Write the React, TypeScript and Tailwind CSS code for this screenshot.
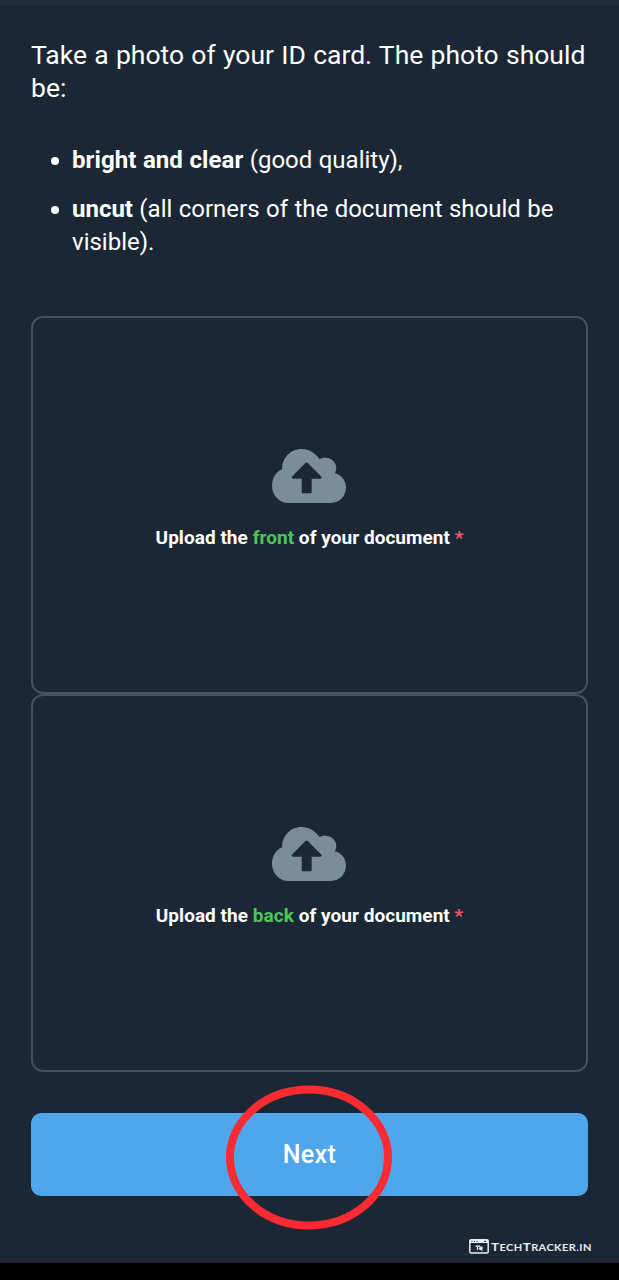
type UploadBoxProps = { before: string; side: string };

function CloudUpload() {
  return (
    <svg viewBox="0 32 640 448" preserveAspectRatio="none" className="mr-px h-[54px] w-[74px] text-[#7b8c9a]" fill="currentColor" aria-hidden="true">
      <path d="M544 233c8-12 12-26 12-41 0-53-43-88-94-88-19.700 0-36 4-49.300 12.200C376 64.200 315.300 32 256 32c-97 0-172 76-168 168.100C36 219.800 0 273.200 0 336c0 79.500 64.500 144 144 144h368c70.700 0 128-57.300 128-128 0-58-41-107-96-119zM418 278H343v110c0 8-3 12-11 12h-64c-8 0-11-4-11-12V278h-75c-12 0-16-9-8-17l115-113c6-6 14-6 20 0l117 113c8 8 4 17-8 17z" />
    </svg>
  );
}

function UploadBox({ before, side }: UploadBoxProps) {
  return (
    <button className="flex h-[378px] w-full flex-col items-center rounded-xl border-2 border-[#415263] pt-[131px]">
      <CloudUpload />
      <span className="mt-[22px] text-[19px] leading-[26px] font-bold tracking-[0.04px] whitespace-nowrap">
        {before} <span className="text-[#4fc556]">{side}</span> of your document <span className="text-[#ea5b6e]">*</span>
      </span>
    </button>
  );
}

function Watermark() {
  return (
    <div className="flex items-center gap-0.5 text-[#e6edf3]">
      <svg viewBox="0 0 20 15" className="h-[15px] w-5" fill="none" stroke="currentColor" aria-hidden="true">
        <rect x="0.8" y="0.8" width="18.400" height="13.200" rx="1.300" strokeWidth="1.500" />
        <path d="M1 2.500h18" strokeWidth="3" />
        <path d="M2.500 2.400h1M5 2.400h1M7.500 2.400h1M15 2.400h2" stroke="#1c2735" strokeWidth="1" />
        <path d="M6.500 7.200h4.500M8.500 7v4M11 7.500v3.500M11 8.200h2v1.400h-2l2.500 2" strokeWidth="1.200" />
      </svg>
      <span className="flex w-[100px] origin-left scale-x-[1.22] items-baseline pt-0.5 font-[Lato,sans-serif] text-[11px] leading-[14px] font-bold tracking-[0.35px] whitespace-nowrap">
        T<span className="text-[9px]">ECH</span>T<span className="text-[9px]">RACKER.IN</span>
      </span>
    </div>
  );
}

export default function App() {
  return (
    <div className="flex h-[1280px] w-[619px] flex-col overflow-hidden border-b-[17px] border-black bg-[#1c2735] font-[Roboto,sans-serif] text-white">
      <div className="h-[5px] shrink-0 bg-[#232f3d]" />
      <main className="flex flex-col px-[31px] pt-[33px]">
        <p className="text-[26.500px] leading-[33px] [word-spacing:0.7px]">Take a photo of your ID card. The photo should be:</p>
        <ul className="mt-[40px] flex flex-col gap-4 text-[24px] leading-[33px] [word-spacing:0.45px]">
          <li className="flex">
            <span className="mt-[13px] mr-[13px] ml-5 h-2 w-2 shrink-0 rounded-full bg-white" />
            <span><b className="tracking-[0.08px]">bright and clear</b> (good quality),</span>
          </li>
          <li className="flex">
            <span className="mt-[13px] mr-[13px] ml-5 h-2 w-2 shrink-0 rounded-full bg-white" />
            <span><b>uncut</b> (all corners of the document should be visible).</span>
          </li>
        </ul>
        <section className="mt-[57px] flex flex-col">
          <UploadBox before="Upload the" side="front" />
          <UploadBox before="Upload the" side="back" />
        </section>
        <button className="relative mt-[41px] h-[83px] rounded-[10px] bg-[#4fa6eb] text-[25px] font-medium tracking-[0.4px]">
          Next
          <svg viewBox="0 0 167 145" className="absolute top-[-28px] left-[195px] h-[145px] w-[167px]" fill="none" aria-hidden="true">
            <ellipse cx="83" cy="72.500" rx="79" ry="68" stroke="#fb2b32" strokeWidth="8" />
          </svg>
        </button>
      </main>
      <footer className="mt-[42px] flex justify-end pr-[28px]">
        <Watermark />
      </footer>
    </div>
  );
}
